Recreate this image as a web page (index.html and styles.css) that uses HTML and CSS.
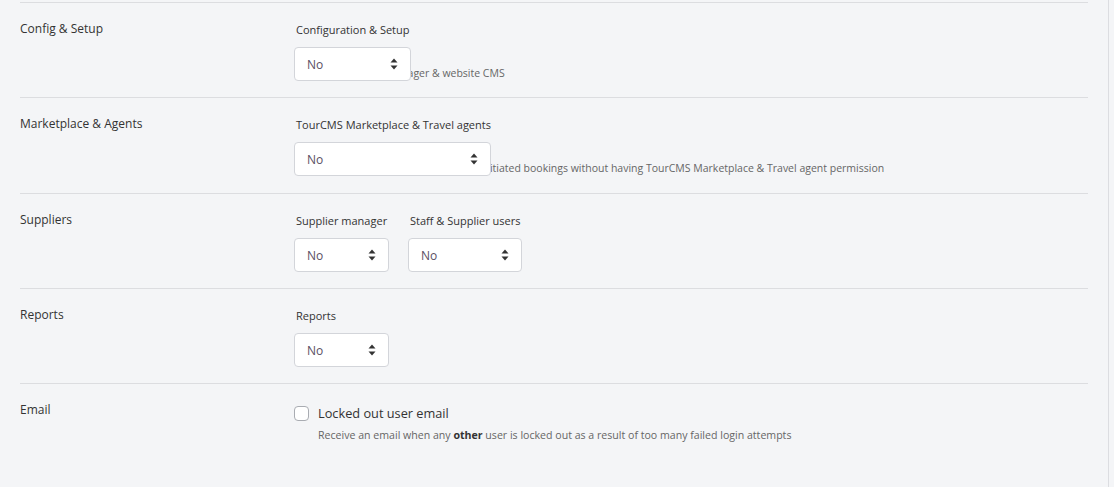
FILE: index.html
```html
<!DOCTYPE html>
<html lang="en">
<head>
  <meta charset="UTF-8">
  <meta name="viewport" content="width=device-width, initial-scale=1.0">
  <title>User permissions</title>
  <link rel="stylesheet" href="styles.css">
</head>
<body>
  <div class="page">

    <div class="row">
      <div class="section">Config &amp; Setup</div>
      <div class="fields">
        <div class="field">
          <div class="field-label">Configuration &amp; Setup</div>
          <div class="select wide-1">
            <span>No</span>
            <svg width="8" height="12" viewBox="0 0 8 12"><path d="M4 0.5L7.5 4.5H0.5Z M4 11.5L7.5 7.5H0.5Z" fill="#333"/></svg>
          </div>
          <div class="help">Access to channel manager &amp; website CMS</div>
        </div>
      </div>
    </div>

    <div class="row tall">
      <div class="section">Marketplace &amp; Agents</div>
      <div class="fields">
        <div class="field">
          <div class="field-label">TourCMS Marketplace &amp; Travel agents</div>
          <div class="select wide-2">
            <span>No</span>
            <svg width="8" height="12" viewBox="0 0 8 12"><path d="M4 0.5L7.5 4.5H0.5Z M4 11.5L7.5 7.5H0.5Z" fill="#333"/></svg>
          </div>
          <div class="help">Allow user to view and manage agent initiated bookings without having TourCMS Marketplace &amp; Travel agent permission</div>
        </div>
      </div>
    </div>

    <div class="row">
      <div class="section">Suppliers</div>
      <div class="fields">
        <div class="field">
          <div class="field-label">Supplier manager</div>
          <div class="select">
            <span>No</span>
            <svg width="8" height="12" viewBox="0 0 8 12"><path d="M4 0.5L7.5 4.5H0.5Z M4 11.5L7.5 7.5H0.5Z" fill="#333"/></svg>
          </div>
        </div>
        <div class="field">
          <div class="field-label">Staff &amp; Supplier users</div>
          <div class="select wide-3">
            <span>No</span>
            <svg width="8" height="12" viewBox="0 0 8 12"><path d="M4 0.5L7.5 4.5H0.5Z M4 11.5L7.5 7.5H0.5Z" fill="#333"/></svg>
          </div>
        </div>
      </div>
    </div>

    <div class="row">
      <div class="section">Reports</div>
      <div class="fields">
        <div class="field">
          <div class="field-label">Reports</div>
          <div class="select">
            <span>No</span>
            <svg width="8" height="12" viewBox="0 0 8 12"><path d="M4 0.5L7.5 4.5H0.5Z M4 11.5L7.5 7.5H0.5Z" fill="#333"/></svg>
          </div>
        </div>
      </div>
    </div>

    <div class="row">
      <div class="section">Email</div>
      <div class="fields">
        <div class="check-field">
          <label class="check">
            <span class="box"></span>
            <span class="check-label">Locked out user email</span>
          </label>
          <div class="check-help">Receive an email when any <b>other</b> user is locked out as a result of too many failed login attempts</div>
        </div>
      </div>
    </div>

  </div>
</body>
</html>
```

FILE: styles.css
```css
body {
  margin: 0;
  background: #f4f5f7;
  font-family: "Open Sans", "Noto Sans", Arial, sans-serif;
  color: #333;
}
.page {
  width: 1068px;
  height: 487px;
  padding: 2px 20px 0 20px;
  border-right: 1px solid #dcdde1;
}
.row {
  display: grid;
  grid-template-columns: 274px 1fr;
  height: 95px;
  padding-top: 16px;
  box-sizing: border-box;
  border-top: 1px solid #dcdde0;
}
.row.tall {
  height: 96px;
}
.section {
  font-size: 12px;
  line-height: 20px;
  color: #333;
}
.fields {
  display: flex;
  gap: 19px;
}
.field-label {
  font-size: 11px;
  line-height: 18px;
  margin: 2px 0 8px 2px;
  color: #333;
}
.select {
  position: relative;
  z-index: 1;
  display: flex;
  align-items: center;
  justify-content: space-between;
  box-sizing: border-box;
  width: 95px;
  height: 34px;
  padding: 0 12px 0 12px;
  background: #fff;
  border: 1px solid #d3d5da;
  border-radius: 4px;
  font-size: 12px;
  color: #5a4f63;
}
.wide-1 { width: 117px; }
.wide-2 { width: 197px; }
.wide-3 { width: 114px; }
.help {
  margin: -16px 0 0 2px;
  font-size: 10.5px;
  line-height: 16px;
  color: #666;
  white-space: nowrap;
}
.check-field {
  padding-top: 4px;
}
.check {
  display: flex;
  align-items: center;
  gap: 9px;
}
.box {
  width: 15px;
  height: 15px;
  box-sizing: border-box;
  background: #fff;
  border: 1px solid #a9acb2;
  border-radius: 4px;
}
.check-label {
  font-size: 12.75px;
  line-height: 18px;
  color: #333;
}
.check-help {
  margin: 5px 0 0 24px;
  font-size: 10.6px;
  line-height: 16px;
  color: #666;
}
.check-help b {
  color: #333;
}
```
